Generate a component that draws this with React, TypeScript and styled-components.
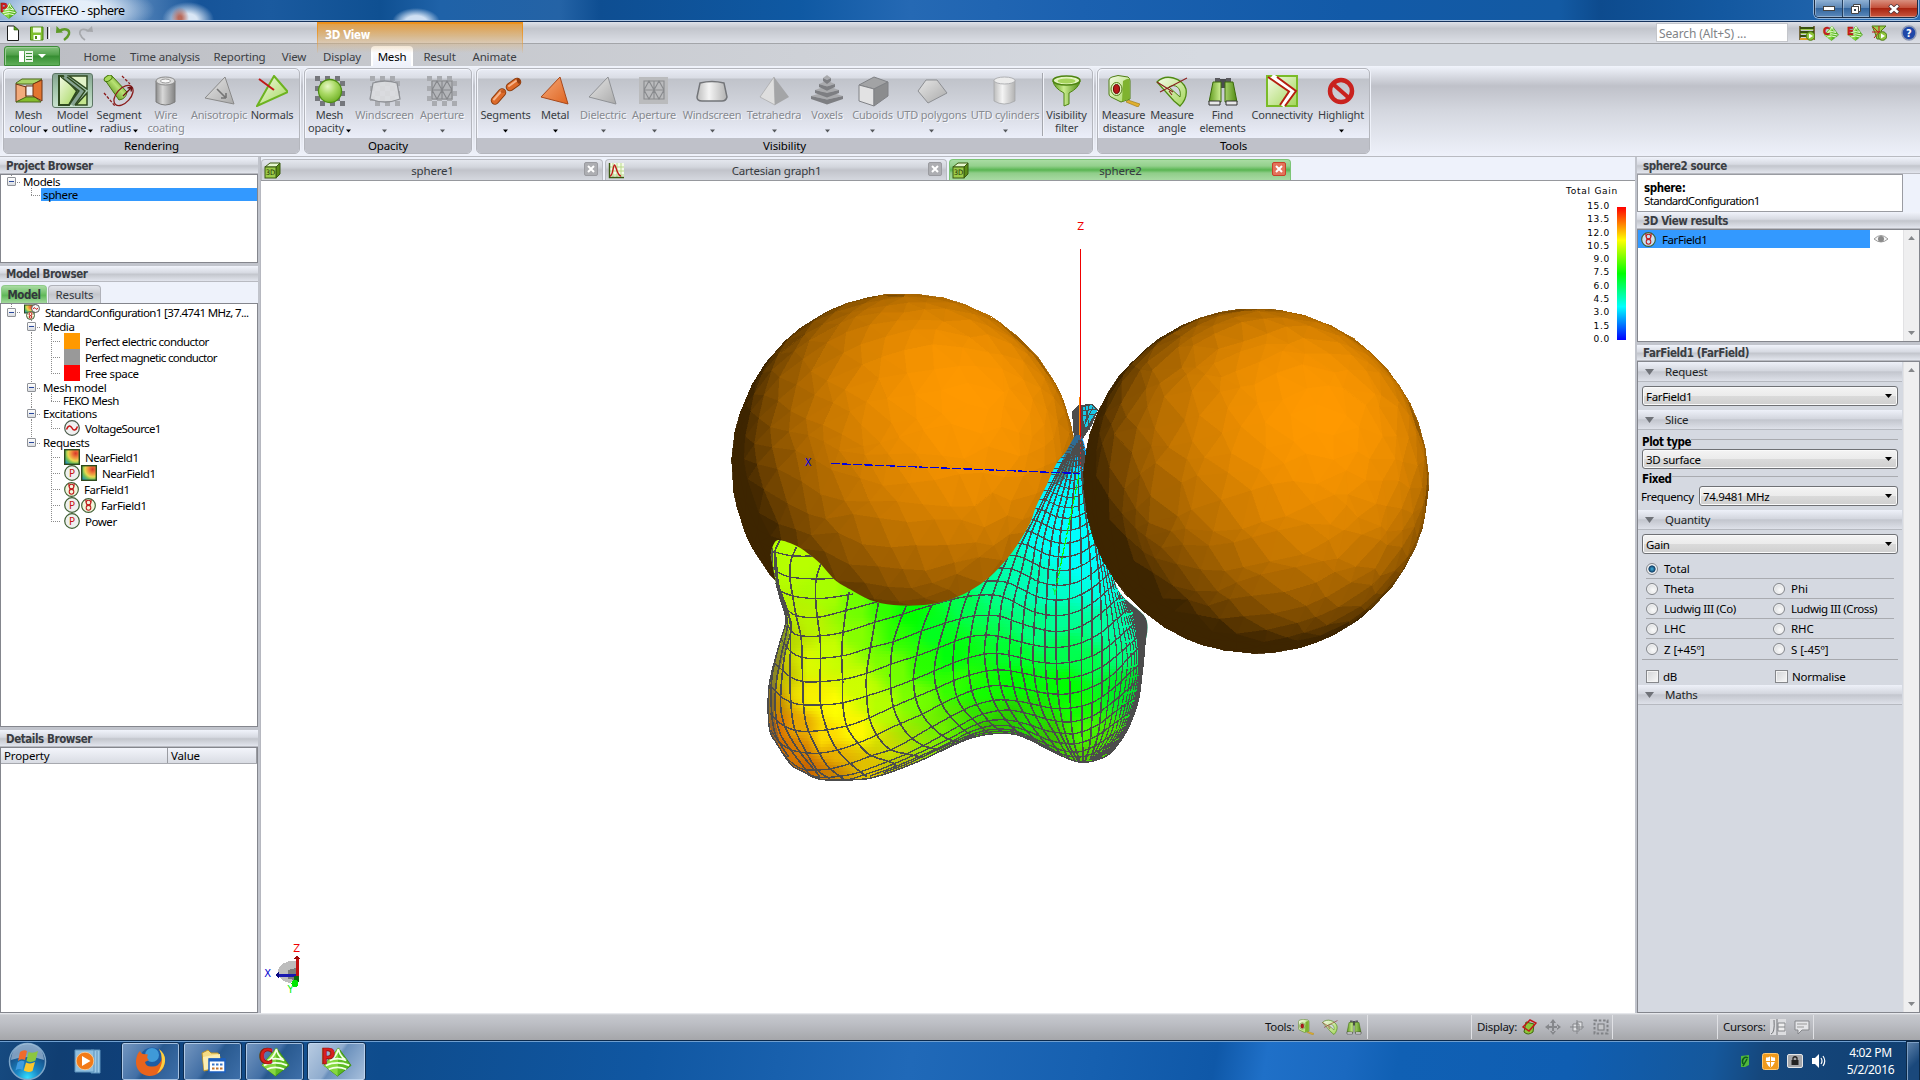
import React from "react";
import styled, { createGlobalStyle, css } from "styled-components";

const UI = `"Noto Sans", "Open Sans", sans-serif`;
const UIB = `"DejaVu Sans Condensed", "DejaVu Sans", sans-serif`;

const Global = createGlobalStyle`
  *{box-sizing:border-box}
  html,body{margin:0;padding:0;overflow:hidden;background:#c1c4cc}
  body{font:11px ${UI};letter-spacing:-.2px;color:#000;white-space:nowrap}
  svg{display:block;flex:none}
`;

/* ---------- frame ---------- */
const Screen = styled.div`width:1920px;height:1080px;display:flex;flex-direction:column;overflow:hidden;`;
const Defs = styled.svg`position:absolute;width:0;height:0`;
const TitleBar = styled.header`
  height:22px;flex:none;display:flex;align-items:flex-start;justify-content:space-between;
  border-bottom:1px solid #16335c;box-shadow:inset 0 -1px #a9c4e2;
  background:
    radial-gradient(ellipse 80px 26px at 75px 10px,rgba(235,243,252,.95) 35%,rgba(200,220,242,0) 100%),
    radial-gradient(ellipse 9px 11px at 180px 18px,rgba(180,85,65,.85) 20%,rgba(170,90,80,0)),
    radial-gradient(ellipse 26px 18px at 188px 20px,#d9e6f5 35%,rgba(160,190,225,0)),
    radial-gradient(ellipse 24px 14px at 416px 22px,#cfe0f3 45%,rgba(120,165,210,0)),
    linear-gradient(90deg,#8db0d6 0,#6d97c6 110px,#165499 200px,#1a5a9f 270px,#0f5092 380px,#1f62a8 440px,#2463a6 560px,#0e4e92 600px,#0f59a3 800px,#2569b4 910px,#1b61b0 1080px,#125aa8 1350px,#135aa3 1560px,#0d4b8e 1600px,#1358a0 1720px,#2a6db5 1920px);
`;
const TitleText = styled.div`display:flex;align-items:center;height:21px;font-size:12.5px;letter-spacing:-.55px;gap:4px;`;
const WinButtons = styled.div`display:flex;height:18px;margin-right:2px;border:1px solid #1b2c44;border-top:0;border-radius:0 0 5px 5px;overflow:hidden;box-shadow:0 0 0 1px rgba(220,235,250,.6);`;
const WinButton = styled.div<{ $w: number; $close?: boolean }>`
  width:${p => p.$w}px;display:flex;align-items:center;justify-content:center;border-right:1px solid #24405f;
  box-shadow:inset 1px -1px rgba(255,255,255,.35);
  background:${p => p.$close ? "linear-gradient(#d9907f,#c4513b 45%,#a82410 50%,#c8573f)" : "linear-gradient(#8fb1d4,#5d88b7 45%,#34669e 50%,#5c8abb)"};
  &:last-child{border-right:0}
`;
const QuickBar = styled.div`
  height:22px;flex:none;display:flex;align-items:center;position:relative;
  background:linear-gradient(#dfe2e9,#c2c5cc 30%,#dcdfe6);border-bottom:1px solid #a3a5a9;
`;
const QuickIcons = styled.div`display:flex;align-items:center;padding-left:5px;width:317px;flex:none`;
const Context = styled.div`
  width:206px;height:31px;align-self:flex-start;flex:none;padding:4px 0 0 7px;position:relative;z-index:2;
  font:bold 11.5px ${UIB};letter-spacing:-.35px;color:#fff;
  border:1px solid;border-top-width:2px;border-bottom:0;border-image:linear-gradient(#ee8e14,rgba(238,142,20,0)) 2;
  background:linear-gradient(rgba(226,158,66,.95),rgba(218,180,128,.8) 45%,rgba(210,202,190,0));
`;
const Spacer = styled.div`flex:1`;
const Search = styled.div`width:132px;height:19px;background:#fff;border:1px solid #c4c6cb;color:#808387;font-size:12px;letter-spacing:-.13px;padding:1px 2px;line-height:18px;margin-right:11px`;
const QuickRight = styled.div`display:flex;align-items:center;gap:8px;padding-right:3px`;
const TabRow = styled.div`height:22px;flex:none;display:flex;align-items:flex-end;background:linear-gradient(90deg,#bbbdc3 0,#c6c8cd 400px,#d6dae1 1200px);`;
const AppButton = styled.div`
  width:56px;height:20px;margin-left:4px;margin-right:13px;border:1px solid #3c8c38;border-radius:3px 3px 0 0;display:flex;align-items:center;justify-content:center;gap:5px;
  background:linear-gradient(#84c27c,#4f9f49 45%,#358d31 50%,#5fae59);box-shadow:inset 1px 1px #9ccb96;
`;
const RibbonTab = styled.div<{ $w: number; $on?: boolean }>`
  width:${p => p.$w}px;height:20px;line-height:21px;text-align:center;font-size:11.5px;letter-spacing:-.2px;color:#3b3e44;
  ${p => p.$on && css`background:linear-gradient(#fff,#eef1fa);color:#000;border:2px solid #fff;border-bottom:0;border-radius:4px 4px 0 0;line-height:18px;`}
`;
const Ribbon = styled.div`
  height:91px;flex:none;display:flex;gap:4px;padding:2px 3px 3px;border-bottom:1px solid #b9bbc1;
  background:linear-gradient(#f1f4fc 0,#e4e7ef 5px,#bfc1c9 20px,#d4d7df 45px,#eef1fa 90px);
`;
const Group = styled.div<{ $w: number }>`
  width:${p => p.$w}px;height:86px;border:1px solid #b4b6bd;border-radius:5px;display:flex;flex-direction:column;overflow:hidden;
  box-shadow:0 0 0 1px #eff2fa, inset 1px 1px #f4f6fc;
  background:linear-gradient(#e9ecf5 0,#d9dce4 9px,#c0c3ca 10px,#cdd0d8 30px,#eceffa 70px);
`;
const GroupItems = styled.div`flex:1;display:flex;padding-left:2px;padding-top:4px`;
const GroupTitle = styled.div`height:15px;background:#bfc1c9;text-align:center;line-height:15px;font-size:11.5px;letter-spacing:-.15px`;
const Tool = styled.div<{ $w: number; $off?: boolean }>`
  width:${p => p.$w}px;flex:none;display:flex;flex-direction:column;align-items:center;text-align:center;
  color:${p => p.$off ? "#878a90" : "#393d43"};text-shadow:${p => p.$off ? "1px 1px #f7f8fc" : "none"};
  font-size:11px;letter-spacing:-.2px;line-height:13px;
`;
const IconBox = styled.div<{ $on?: boolean }>`
  width:41px;height:35px;display:flex;align-items:center;justify-content:center;border-radius:3px;border:1px solid transparent;
  ${p => p.$on && css`border-color:#5c7564;background:linear-gradient(#86a392,#9fc2a8 40%,#c9e2cf);`}
`;
const ToolLine = styled.div`display:flex;align-items:flex-end;height:13px;justify-content:center;gap:1px`;
const Divider = styled.div`width:2px;height:63px;background:#a4a6ad;border-right:1px solid #f2f4fa;flex:none`;

/* ---------- body ---------- */
const Body = styled.main`height:856px;flex:none;display:grid;grid-template-columns:260px 1375px 285px;background:#c1c4cc;`;
const LeftCol = styled.aside`display:flex;flex-direction:column;padding-right:2px;border-right:0`;
const PanelHead = styled.div<{ $h?: number }>`
  height:${p => p.$h || 17}px;flex:none;padding-left:6px;font:bold 11.5px/${p => (p.$h ? 17 : 19)}px ${UIB};letter-spacing:-.42px;color:#3a3d43;overflow:hidden;
  border-bottom:1px solid #b8bac1;background:linear-gradient(#f0f3fb,#d7dae2 45%,#c3c6cd 55%,#e2e5ed);
`;
const Box = styled.div<{ $h: number }>`height:${p => p.$h}px;flex:none;background:#fff;border:1px solid #84868d;overflow:hidden;`;
const Gap = styled.div<{ $h: number; $c?: string }>`height:${p => p.$h}px;flex:none;background:${p => p.$c || "#c1c4cc"}`;
const MiniTabs = styled.div`height:21px;flex:none;display:flex;gap:1px;align-items:flex-end;background:#eef2fb;padding-left:1px`;
const MiniTab = styled.div<{ $w: number; $on?: boolean }>`
  width:${p => p.$w}px;height:18px;text-align:center;border-radius:4px 4px 0 0;
  font:${p => p.$on ? `bold 11.5px/19px ${UIB}` : `11.5px/17px ${UI}`};letter-spacing:${p => p.$on ? -.45 : -.15}px;color:#33373c;
  border:1px solid ${p => p.$on ? "#8fcb89" : "#b0b2b9"};border-bottom:0;
  background:${p => p.$on ? "linear-gradient(#a9dba3,#6fbf68 45%,#5fb858 55%,#a4d89e)" : "linear-gradient(#e2e4ea,#c4c6cc 50%,#d9dce2)"};
`;
const Row = styled.div<{ $h: number }>`height:${p => p.$h}px;display:flex;align-items:center;`;
const Cell = styled.div<{ $k: string }>`
  width:20px;height:100%;flex:none;position:relative;display:flex;align-items:center;padding-left:6px;
  &::before{content:"";position:absolute;left:10px;top:0;width:1px;
    height:${p => (p.$k === "end" || p.$k === "toggleEnd" ? "50%" : p.$k === "line" || p.$k === "tee" || p.$k === "toggle" ? "100%" : "0")};
    background:repeating-linear-gradient(#8b8b8b 0 1px,transparent 1px 2px)}
  &::after{content:"";position:absolute;left:10px;right:1px;top:50%;
    height:${p => (p.$k === "none" || p.$k === "line" ? 0 : 1)}px;
    background:repeating-linear-gradient(90deg,#8b8b8b 0 1px,transparent 1px 2px)}
`;
const Toggle = styled.i`
  width:9px;height:9px;border:1px solid #8f9297;border-radius:1px;background:linear-gradient(#fff,#d9dce0);position:relative;z-index:1;
  &::after{content:"";position:absolute;left:1px;top:3px;width:5px;height:1px;background:#28479c}
`;
const TreeLabel = styled.span<{ $gap?: number; $sel?: boolean; $ls?: number }>`
  padding-left:${p => p.$gap ?? 2}px;font-size:11.5px;letter-spacing:${p => p.$ls ?? -.38}px;line-height:13px;
  ${p => p.$sel && css`flex:1;background:#3399ff;`}
`;
const Swatch = styled.i<{ $c: string }>`width:16px;height:16px;background:${p => p.$c};margin-left:3px`;
const IconGap = styled.span<{ $g: number }>`margin-left:${p => p.$g}px;display:flex`;
const Columns = styled.div`
  height:16px;display:grid;grid-template-columns:167px 1fr;background:linear-gradient(#f3f5fb,#d9dce3);border-bottom:1px solid #a7a9af;font-size:11.5px;letter-spacing:-.15px;line-height:15px;
  span{padding-left:3px;border-right:1px solid #9a9ca2}
`;

const Centre = styled.section`display:flex;flex-direction:column;background:#fff;overflow:hidden;border-left:1px solid #b6b8c0`;
const DocTabs = styled.div`height:24px;flex:none;display:flex;gap:2px;align-items:flex-end;background:#eef2fb;border-bottom:1px solid #96989d`;
const DocTab = styled.div<{ $on?: boolean }>`
  width:342px;height:21px;display:flex;align-items:center;border-radius:4px 4px 0 0;padding:0 4px 0 2px;color:#363a40;font-size:11.5px;letter-spacing:-.2px;
  border:1px solid ${p => p.$on ? "#7cc576" : "#b9bbc2"};border-bottom:0;
  background:${p => p.$on ? "linear-gradient(#a9dca3,#93d08c 30%,#58b551 50%,#8fcd89 65%,#a8daa3)" : "linear-gradient(#e4e7ee,#d2d5dc 35%,#c1c3ca 50%,#d5d8df)"};
  span{flex:1;text-align:center}
`;
const Close = styled.i<{ $on?: boolean }>`
  width:14px;height:14px;border-radius:2px;border:1px solid ${p => p.$on ? "#c8402a" : "#9a9ba0"};background:${p => p.$on ? "#e3735a" : "#adaeb2"};
  display:flex;align-items:center;justify-content:center;margin-bottom:2px;
`;
const Canvas = styled.div`position:relative;width:1374px;flex:1;overflow:hidden`;

const RightCol = styled.aside`display:flex;flex-direction:column;padding-left:2px;`;
const SourceWrap = styled.div`height:38px;flex:none;background:#eef2fb`;
const Source = styled.div`width:266px;height:38px;background:#fff;border:1px solid #9a9ca2;padding:7px 0 0 6px;line-height:13px;font-size:11.5px;letter-spacing:-.66px;b{display:block;font:bold 11.5px/12px ${UIB};letter-spacing:-.4px}`;
const Results = styled.div`height:113px;flex:none;background:#fff;border:1px solid #84868d;display:flex`;
const ResultList = styled.div`flex:1`;
const ResultRow = styled.div`height:18px;display:flex;align-items:center;font-size:11.5px;letter-spacing:-.42px`;
const ResultSel = styled.div`width:232px;height:18px;background:#3399ff;display:flex;align-items:center;gap:6px;padding-left:3px;margin-right:3px`;
const Scroll = styled.div`width:16px;background:#efeff0;display:flex;flex-direction:column;justify-content:space-between;align-items:center;padding:6px 0;border-left:1px solid #e2e2e4`;
const Form = styled.div`flex:1;display:flex;background:#d5d9e1;border:1px solid #84868d;`;
const FormMain = styled.div`width:266px;padding-right:1px`;
const Section = styled.div`
  height:20px;display:flex;align-items:center;gap:11px;padding-left:7px;font-size:11.5px;letter-spacing:-.2px;color:#1c1f24;
  border-bottom:1px solid #b6b9c0;background:linear-gradient(#eef1f9,#d4d7df 45%,#c3c6ce 52%,#dee1e9);
`;
const Select = styled.div<{ $w?: number }>`
  width:${p => p.$w || 256}px;height:20px;margin-left:4px;border:1px solid #6f7175;border-radius:3px;display:flex;align-items:center;justify-content:space-between;
  padding:0 5px 0 3px;font-size:11.5px;letter-spacing:-.32px;background:linear-gradient(#f4f4f4,#ebebeb 50%,#dadada 51%,#cfcfcf);box-shadow:inset 0 0 0 1px #fafafa;
`;
const Legend = styled.div`height:15px;display:flex;align-items:center;margin-left:4px;width:256px;font:bold 11.5px/14px ${UIB};letter-spacing:-.42px;&::after{content:"";flex:1;height:1px;background:#a9abb0;margin-top:-4px}`;
const FieldRow = styled.div`display:flex;align-items:center;padding-left:3px;font-size:11.5px;letter-spacing:-.38px;height:20px;> span{width:54px}`;
const Options = styled.div`margin-left:4px;width:256px;border-bottom:1px solid #a5a7ac;height:101px;padding:0 4px`;
const OptRow = styled.div<{ $last?: boolean; $ls?: number }>`
  height:20px;display:grid;grid-template-columns:127px 1fr;align-items:center;border-bottom:${p => (p.$last ? 0 : 1)}px solid #a9abb0;font-size:11.5px;letter-spacing:${p => p.$ls ?? -.08}px;
`;
const Opt = styled.label<{ $gap?: number }>`display:flex;align-items:center;gap:${p => p.$gap ?? 6}px`;
const Radio = styled.i<{ $on?: boolean }>`
  width:12px;height:12px;border-radius:50%;border:1px solid #84878c;background:${p => (p.$on ? "radial-gradient(circle,#3fb3e0 0,#123e66 3.2px,#e9edf2 4px)" : "radial-gradient(circle at 60% 60%,#fbfbfb,#cfd2d6)")};box-shadow:inset 0 0 0 1px #f4f4f4;
`;
const Check = styled.i`width:13px;height:13px;border:1px solid #85878b;background:linear-gradient(135deg,#d2d4d7,#f8f8f8);box-shadow:inset 0 0 0 1px #f4f4f4`;
const Checks = styled.div`display:grid;grid-template-columns:129px 1fr;height:25px;align-items:end;padding:0 0 1px 4px;margin-left:4px;font-size:11.5px;letter-spacing:-.22px;`;

/* ---------- bottom ---------- */
const Status = styled.footer`height:27px;flex:none;display:flex;align-items:center;background:linear-gradient(#f0f1f5 0,#c6c8cd 2px,#bcbec4 40%,#a5a6aa);font-size:11.5px;letter-spacing:-.3px;color:#101215`;
const StatusGroup = styled.div<{ $w: number; $border?: boolean }>`
  width:${p => p.$w}px;height:24px;display:flex;align-items:center;flex:none;gap:8px;padding-left:5px;${p => p.$border !== false && css`border-right:1px solid #e0e1e5;`}
  svg:first-of-type{margin-left:-4px}
`;
const TaskBar = styled.div`
  height:41px;flex:none;display:flex;border-top:1px solid #0b2a4d;box-shadow:inset 0 1px #6f9fd0;align-items:stretch;
  background:linear-gradient(100deg,#164a80 0,#103e72 60px,#0f4079 130px,#14508f 300px,#0e4c8d 380px,#1057a2 640px,#2069b8 900px,#1660b0 1080px,#0f58a8 1200px,#1f70c8 1250px,#1a69c0 1330px,#1060b4 1380px,#0f5eb2 1550px,#15589c 1690px,#15477c 1740px,#103e70 1920px);
`;
const TaskSlot = styled.div<{ $w: number }>`width:${p => p.$w}px;display:flex;align-items:center;justify-content:center;flex:none`;
const TaskButton = styled.div<{ $on?: boolean }>`
  width:59px;height:39px;margin:1px 3px 0 0;border:1px solid #0d2c50;border-radius:3px;display:flex;align-items:center;justify-content:center;flex:none;
  box-shadow:inset 0 0 0 1px rgba(200,222,245,.75);
  background:${p => (p.$on ? "linear-gradient(125deg,#b9cce2 0,#8facce 45%,#6a90bc 50%,#a9c1dd)" : "linear-gradient(125deg,#7597c0 0,#426fa5 45%,#28598f 52%,#3f70aa)")};
`;
const Tray = styled.div`display:flex;align-items:center;gap:8px;padding-right:9px`;
const Clock = styled.div`width:69px;text-align:center;color:#fff;font-size:12px;letter-spacing:-.35px;line-height:17px;padding-top:3px;margin-right:1px`;
const ShowDesk = styled.div`width:14px;border:1px solid #0b2948;box-shadow:inset 1px 1px #7d9fc4;background:linear-gradient(135deg,#5f83ab,#1a487b 60%)`;

/* ---------- small shared drawings ---------- */
const Down = ({ c = "#000", w = 5, h = 3 }: { c?: string; w?: number; h?: number }) => (
  <svg width={w} height={h} viewBox="0 0 10 6" preserveAspectRatio="none"><path d="M0 0H10L5 6Z" fill={c} /></svg>
);
const Up = () => <svg width="7" height="4" viewBox="0 0 10 6"><path d="M0 6H10L5 0Z" fill="#85878a" /></svg>;

const LogoSvg = styled.svg`overflow:visible`;
const Feko = ({ l, s = 16 }: { l: string; s?: number }) => (
  <LogoSvg width={s} height={s} viewBox="0 0 32 32">
    <path d="M18 2L31 20L17 31L3 20Z" fill="#5dbb22" stroke="#3d9213" />
    <path d="M18 2L17 31L3 20Z" fill="#86d83f" />
    <path d="M18 3Q16 10 11 14M18 3Q19 10 25 14M5 20Q17 15 29 20M9 15Q17 11 26 15M8 24Q17 20 26 24" stroke="#f3ffe6" strokeWidth="1.8" fill="none" />
    <text x="0" y="19" fontFamily="DejaVu Sans Condensed" fontWeight="bold" fontSize="22" fill="#d8201c" stroke="#8e0b0b" strokeWidth=".7" letterSpacing="0">{l}</text>
  </LogoSvg>
);
const Cube3D = () => (
  <svg width="17" height="17" viewBox="0 0 17 17">
    <path d="M1 5L6 1H16L12 5Z" fill="#e6f7cf" stroke="#3a5a10" /><path d="M12 5L16 1V12L12 16Z" fill="#5b8c17" stroke="#3a5a10" />
    <rect x="1" y="5" width="11" height="11" fill="#9ccc4a" stroke="#3a5a10" />
    <text x="1.8" y="13.4" fontFamily="DejaVu Sans Condensed" fontSize="7.5" fill="#1c2e05">3D</text>
  </svg>
);
const GraphIcon = () => (
  <svg width="17" height="17" viewBox="0 0 17 17"><rect x="1" y="1" width="15" height="15" fill="#f4fae8" />
    <path d="M5 1V16M9 1V16M13 1V16M1 5H16M1 9H16M1 13H16" stroke="#b9d98a" /><path d="M1.500 1V15.500H16" stroke="#3a5a10" fill="none" strokeWidth="1.400" />
    <path d="M2 14C5 14 5 3 6.500 3S9 14 13 14" stroke="#c01818" fill="none" strokeWidth="1.400" /></svg>
);
const CloseX = () => <svg width="8" height="8" viewBox="0 0 8 8"><path d="M1 1L7 7M7 1L1 7" stroke="#fff" strokeWidth="2" /></svg>;

const PIcon = () => (
  <svg width="16" height="16" viewBox="0 0 16 16"><circle cx="8" cy="8" r="7.300" fill="#eef0ee" stroke="#3f5f33" strokeWidth="1.200" />
    <text x="4.900" y="12" fontFamily="DejaVu Sans Condensed" fontSize="11" fill="#c81414">P</text></svg>
);
const FarIcon = ({ c = "#f2f6dc" }: { c?: string }) => (
  <svg width="15" height="15" viewBox="0 0 16 16"><circle cx="8" cy="8" r="7.300" fill={c} stroke="#3f5f33" strokeWidth="1.200" />
    <circle cx="8" cy="4.800" r="2.500" fill="none" stroke="#c01c1c" strokeWidth="1.100" /><circle cx="8" cy="10.500" r="2.500" fill="none" stroke="#c01c1c" strokeWidth="1.100" /><path d="M5 1.500L5.500 5M11 1.500L10.500 5M5.500 7.700H10.500" fill="none" stroke="#c01c1c" strokeWidth="1.100" /></svg>
);
const SourceIcon = () => (
  <svg width="16" height="16" viewBox="0 0 16 16"><circle cx="8" cy="8" r="7.300" fill="#f0f0f0" stroke="#4a5a4a" strokeWidth="1.200" />
    <path d="M2.500 9.500C4 5 6.500 5 8 8S12 11 13.500 6.500" fill="none" stroke="#c81414" strokeWidth="1.500" /></svg>
);
const NearIcon = () => (
  <svg width="16" height="16" viewBox="0 0 16 16">
    <rect x=".7" y=".7" width="14.600" height="14.600" fill="url(#nf)" stroke="#2d4a1c" strokeWidth="1.400" /></svg>
);
const ConfigIcon = () => (
  <svg width="16" height="16" viewBox="0 0 16 16"><rect x=".5" y="1" width="10" height="8" fill="url(#nf)" stroke="#2d4a1c" />
    <circle cx="11.500" cy="4.500" r="4" fill="#f4f4f4" stroke="#555" /><path d="M9 5Q10 2.500 11.500 4.500T14 4" stroke="#c81414" fill="none" />
    <circle cx="6.500" cy="11.500" r="4" fill="#f2f6dc" stroke="#3f5f33" /><circle cx="6.500" cy="10" r="1.500" fill="none" stroke="#c01c1c" /><circle cx="6.500" cy="13" r="1.300" fill="none" stroke="#c01c1c" /></svg>
);

/* ---------- ribbon icons ---------- */
const Checker = ({ c }: { c: string }) => (
  <g fill={c}>{Array.from({ length: 36 }, (_, i) => [i % 6, Math.floor(i / 6)]).filter(([x, y]) => (x + y) % 2 === 0).map(([x, y]) => <rect key={`${x}-${y}`} x={1 + x * 5} y={1 + y * 5} width="5" height="5" />)}</g>
);
const grad = (
  <defs>
    <linearGradient id="gg" x1="0" y1="0" x2="1" y2="1"><stop offset="0" stopColor="#f5fbe8" /><stop offset="1" stopColor="#a3d65a" /></linearGradient>
    <linearGradient id="go" x1="0" y1="0" x2="1" y2="1"><stop offset="0" stopColor="#f5a878" /><stop offset="1" stopColor="#df6420" /></linearGradient>
    <linearGradient id="gy" x1="0" y1="0" x2="1" y2="1"><stop offset="0" stopColor="#e6e6e6" /><stop offset="1" stopColor="#aaa" /></linearGradient>
    <linearGradient id="cy" x1="0" x2="1"><stop offset="0" stopColor="#8b8b8b" /><stop offset=".35" stopColor="#d8d8d8" /><stop offset="1" stopColor="#838383" /></linearGradient>
    <linearGradient id="cl" x1="0" x2="1"><stop offset="0" stopColor="#bdbdbd" /><stop offset=".4" stopColor="#f4f4f4" /><stop offset="1" stopColor="#b2b2b2" /></linearGradient>
    <linearGradient id="cg" x1="0" x2="1"><stop offset="0" stopColor="#5f9a1c" /><stop offset=".4" stopColor="#c9ec8e" /><stop offset="1" stopColor="#4f8a12" /></linearGradient>
    <linearGradient id="cd" x1=".2" y1=".8" x2=".8" y2=".2"><stop offset="0" stopColor="#4f8a12" /><stop offset=".6" stopColor="#b9e274" /><stop offset="1" stopColor="#5f9a1c" /></linearGradient>
    <radialGradient id="sg" cx=".4" cy=".3" r=".7"><stop offset="0" stopColor="#e6f7c4" /><stop offset=".5" stopColor="#a9d964" /><stop offset="1" stopColor="#74b32a" /></radialGradient>
    <radialGradient id="nf" cx=".75" cy=".25" r=".95"><stop offset="0" stopColor="#d8362a" /><stop offset=".3" stopColor="#f08a3c" /><stop offset=".55" stopColor="#e8d850" /><stop offset=".75" stopColor="#6cbf58" /><stop offset="1" stopColor="#1f8ec0" /></radialGradient>
  </defs>
);
const ApertureLines = ({ c }: { c: string }) => <path d="M6 6H26V24H6ZM6 15H26M6 15L11 6L21 24L26 15L21 6L11 24L6 15M16 6V24M11 6L6 15M21 6L26 15" stroke={c} fill="none" strokeWidth="1.1" />;
const Tape = () => (<>
  <path d="M20 25L32 29L30 32L18 27Z" fill="#e0b030" stroke="#9a7410" strokeWidth=".6" />
  <path d="M1 5Q1 3 4 2L10 .5L20 2Q22 3 22 6V24L13 27L3 22Q1 21 1 19Z" fill="url(#gg)" stroke="#4f7d14" /><path d="M15 6Q20 3 21.500 4V24L14 26.500Z" fill="#7fb32f" />
  <ellipse cx="8.500" cy="14" rx="5.500" ry="6.500" fill="#dff0bd" stroke="#4f7d14" /><ellipse cx="8.500" cy="14" rx="3" ry="4.500" fill="#b81818" stroke="#5e0909" /></>
);
const Protractor = () => (<>
  <path d="M1 7C10 -2 26 3 30 14C31 20 29 26 24 31L18 26Z" fill="url(#gg)" stroke="#4f8a12" strokeWidth="1.3" /><path d="M13 12C19 8 26 13 24 22Z" fill="#d2d6db" stroke="#4f8a12" />
  <path d="M1 7L17 17M4 17L31 3M13 16L16 20" stroke="#8a2020" strokeWidth="1.100" fill="none" /></>
);
const Binoc = () => (<>
  <path d="M8 3H13V7H8ZM19 3H24V7H19Z" fill="#5a5a5e" /><rect x="13" y="4" width="6" height="9" fill="#4a4c50" />
  <path d="M6 7H14V27H2ZM18 7H26L30 27H18Z" fill="url(#cg)" stroke="#3c6a0c" /><path d="M2 26H13V30H2ZM19 26H30V30H19Z" fill="#e8e8e8" stroke="#333" /></>
);

const icons: Record<string, React.ReactNode> = {
  meshColour: <><path d="M3 8L9 4H29L21 9H3Z" fill="#a8d468" stroke="#4e6a1c" /><path d="M3 9L13 12V23L3 27Z" fill="#f2ab7c" stroke="#6e3210" /><path d="M13 11H21V21H13Z" fill="#eef0f6" stroke="#6e3210" /><path d="M3 27L13 22H22L28 27Z" fill="#84bc2c" stroke="#4e6a1c" /><path d="M20 9L29 5V26L20 21Z" fill="#e27530" stroke="#6e3210" /></>,
  modelOutline: <g stroke="#2f4a20" strokeWidth="2"><path d="M2 1H6L20 16L12 30H2Z" fill="url(#gg)" /><path d="M12 1H30V14Z" fill="#e2f3c8" strokeWidth="1.500" /><path d="M30 18V30H19Z" fill="#c4e68e" strokeWidth="1.500" /><path d="M7 2L25 16L15 30" fill="none" stroke="#86a392" strokeWidth="4.500" /><path d="M4 2L22 16L12 30M10 2L28 16L18 30" fill="none" strokeWidth="1.400" /></g>,
  segmentRadius: <><path d="M2 5L9 1L24 17Q23 24 16 25Z" fill="url(#cd)" stroke="#47780f" /><ellipse cx="5.500" cy="3.500" rx="4.300" ry="2.600" fill="#a8da5a" stroke="#47780f" transform="rotate(-30 5 4)" /><ellipse cx="20.500" cy="20.500" rx="7" ry="12" transform="rotate(42 20.500 20.500)" fill="none" stroke="#8a1b1b" strokeWidth="1.300" /><path d="M20 21L29 12M29 12L24.500 13M29 12L28 16.500" stroke="#6b1212" strokeWidth="1.300" fill="none" /><path d="M19 1L27 9M1 18L12 31" stroke="#8a1b1b" strokeWidth="1.300" strokeDasharray="3 1.500" /></>,
  wire: <><path d="M6 6V27Q15 33 25 27V6Z" fill="url(#cy)" stroke="#7c7c7c" /><ellipse cx="15.500" cy="6" rx="9.500" ry="4" fill="#dcdcdc" stroke="#8a8a8a" /><ellipse cx="15.500" cy="6" rx="5" ry="2" fill="#f8f8f8" stroke="#999" /></>,
  anisotropic: <><path d="M22 2L31 29L2 23Z" fill="url(#gy)" stroke="#8a8a8a" /><path d="M14 14L23 23M23 23V18M23 23H18" stroke="#757575" strokeWidth="1.600" fill="none" /></>,
  normals: <><path d="M18 1L32 17L1 31Z" fill="url(#gg)" stroke="#6db320" strokeWidth="2" /><path d="M3 4L18 15" stroke="#c01818" strokeWidth="2" /></>,
  meshOpacity: <><Checker c="#75777c" /><circle cx="16" cy="16" r="11.500" fill="url(#sg)" stroke="#4e8f12" strokeWidth="1.300" /></>,
  windCheck: <><Checker c="#a9abb0" /><path d="M4 8Q16 4 28 8L31 24Q16 30 1 24Z" fill="#dcdde0" fillOpacity=".9" stroke="#8e9095" strokeWidth="1.300" /></>,
  apertCheck: <><Checker c="#a9abb0" /><rect x="5" y="5" width="22" height="20" fill="#b3b5b9" /><ApertureLines c="#85878b" /></>,
  segments: <g strokeLinecap="round" fill="none"><path d="M5 25.500L12 17.500M20 12L27 7" stroke="#8a3b0c" strokeWidth="8.500" /><path d="M5 25.500L12 17.500M20 12L27 7" stroke="#dc6a2a" strokeWidth="6.500" /><path d="M4 24.500L11 16.500M19 11L26 6" stroke="#f6b48a" strokeWidth="2" /><ellipse cx="28.500" cy="6" rx="1.600" ry="2.800" fill="#8f3c10" transform="rotate(-20 28.500 6)" /><ellipse cx="13" cy="16.500" rx="2.600" ry="1.600" fill="#c25a20" /></g>,
  metal: <path d="M21 2L29 29L2 22Z" fill="url(#go)" stroke="#a8481a" />,
  dielectric: <path d="M21 2L29 29L2 22Z" fill="url(#gy)" stroke="#909296" />,
  aperture: <><rect x="1" y="2" width="29" height="27" fill="#babbbd" /><ApertureLines c="#898b8e" /></>,
  windscreen: <path d="M4 8Q16 5 28 8L31 22Q30 26 26 26H6Q1 26 1 22Z" fill="url(#cl)" stroke="#737579" strokeWidth="1.500" />,
  tetra: <><path d="M16 2L17 30L2 22Z" fill="#dedede" stroke="#a0a0a0" strokeWidth=".6" /><path d="M16 2L31 22L17 30Z" fill="#a4a5a7" /></>,
  voxels: <>{[3, 2, 1, 0].map(i => { const w = 4 + i * 4, y = 2 + i * 6; return <g key={i}><path d={`M16 ${y - 2 - i * .6}L${16 + w} ${y + 1}L16 ${y + 3 + i * .5}L${16 - w} ${y + 1}Z`} fill="#a9aaad" /><path d={`M${16 - w} ${y + 1}L16 ${y + 3 + i * .5}L${16 + w} ${y + 1}V${y + 4}L16 ${y + 7 + i * .8}L${16 - w} ${y + 4}Z`} fill="#7d7e82" /></g>; })}</>,
  cuboids: <g stroke="#808286"><path d="M2 10L17 2L31 7L17 14Z" fill="#a2a3a5" /><path d="M2 10L17 14V31L2 26Z" fill="#e2e2e3" /><path d="M17 14L31 7V21L17 31Z" fill="#8b8c8e" /></g>,
  polygon: <path d="M10 5H21L31 18L12 28L2 16Z" fill="url(#gy)" stroke="#8d8f93" />,
  cylinder: <><path d="M5 5V26Q15 32 26 26V5Z" fill="url(#cl)" stroke="#a6a7aa" strokeWidth=".8" /><ellipse cx="15.500" cy="5.500" rx="10.500" ry="3.500" fill="#ececec" stroke="#b0b1b4" /></>,
  funnel: <><path d="M2 6Q3 13 13 18V31L18 29V18Q28 13 29 6Z" fill="url(#cg)" stroke="#4d8411" /><ellipse cx="15.500" cy="5.500" rx="13.500" ry="4.500" fill="#e2f4bd" stroke="#4d8411" strokeWidth="1.500" /><ellipse cx="15.500" cy="6" rx="9" ry="2.500" fill="#a6d45c" /></>,
  tape: <Tape />, angle: <Protractor />, find: <Binoc />,
  connectivity: <><rect x="1" y="1" width="30" height="30" fill="url(#gg)" stroke="#7abb27" strokeWidth="2" /><path d="M6 1L27 16L16 31" fill="none" stroke="#fff" strokeWidth="5" /><path d="M2 2L23 16.500L14 30M11 2L30 16L19 31" fill="none" stroke="#b51f10" strokeWidth="2" /></>,
  highlight: <><circle cx="16" cy="16" r="11" fill="none" stroke="#c9221e" strokeWidth="4.500" /><path d="M8 9L24 23" stroke="#c9221e" strokeWidth="4" /></>,
};
const Icon = ({ n, s = 32 }: { n: string; s?: number }) => <svg width={s} height={s} viewBox="0 0 32 32">{icons[n]}</svg>;

type ToolDef = { w: number; i: string; a: string; b?: string; off?: boolean; arrow?: boolean; on?: boolean };
const ToolItem = ({ t }: { t: ToolDef }) => (
  <Tool $w={t.w} $off={t.off}>
    <IconBox $on={t.on}><Icon n={t.i} /></IconBox>
    <ToolLine>{t.a}</ToolLine>
    <ToolLine>{t.b}{t.arrow && <IconGap $g={t.b ? 1 : 0}><svg width="5" height="6" viewBox="0 0 5 6"><path d="M0 1.500H5L2.500 4.500Z" fill={t.off ? "#55585c" : "#000"} /></svg></IconGap>}</ToolLine>
  </Tool>
);
const groups: { title: string; w: number; tools: ToolDef[] }[] = [
  { title: "Rendering", w: 297, tools: [
    { w: 45, i: "meshColour", a: "Mesh", b: "colour", arrow: true }, { w: 43, i: "modelOutline", a: "Model", b: "outline", arrow: true, on: true },
    { w: 50, i: "segmentRadius", a: "Segment", b: "radius", arrow: true }, { w: 44, i: "wire", a: "Wire", b: "coating", off: true },
    { w: 62, i: "anisotropic", a: "Anisotropic", off: true }, { w: 44, i: "normals", a: "Normals" }] },
  { title: "Opacity", w: 168, tools: [
    { w: 45, i: "meshOpacity", a: "Mesh", b: "opacity", arrow: true }, { w: 65, i: "windCheck", a: "Windscreen", off: true, arrow: true }, { w: 50, i: "apertCheck", a: "Aperture", off: true, arrow: true }] },
  { title: "Visibility", w: 617, tools: [
    { w: 53, i: "segments", a: "Segments", arrow: true }, { w: 46, i: "metal", a: "Metal", arrow: true }, { w: 50, i: "dielectric", a: "Dielectric", off: true, arrow: true },
    { w: 52, i: "aperture", a: "Aperture", off: true, arrow: true }, { w: 64, i: "windscreen", a: "Windscreen", off: true, arrow: true }, { w: 60, i: "tetra", a: "Tetrahedra", off: true, arrow: true },
    { w: 46, i: "voxels", a: "Voxels", off: true, arrow: true }, { w: 45, i: "cuboids", a: "Cuboids", off: true, arrow: true }, { w: 73, i: "polygon", a: "UTD polygons", off: true, arrow: true },
    { w: 74, i: "cylinder", a: "UTD cylinders", off: true, arrow: true }, { w: 45, i: "funnel", a: "Visibility", b: "filter" }] },
  { title: "Tools", w: 273, tools: [
    { w: 47, i: "tape", a: "Measure", b: "distance" }, { w: 50, i: "angle", a: "Measure", b: "angle" }, { w: 51, i: "find", a: "Find", b: "elements" },
    { w: 68, i: "connectivity", a: "Connectivity" }, { w: 50, i: "highlight", a: "Highlight", arrow: true }] },
];

/* ---------- 3D scene (viewport coordinates = screen coordinates) ---------- */
type V = [number, number, number];
const unit = (v: V): V => { const l = Math.hypot(...v); return [v[0] / l, v[1] / l, v[2] / l]; };
const LIGHT = unit([0.38, 0.38, 0.84]);

function sphereFaces(seed: number) {
  const g = (1 + Math.sqrt(5)) / 2;
  const p: V[] = [[-1, g, 0], [1, g, 0], [-1, -g, 0], [1, -g, 0], [0, -1, g], [0, 1, g], [0, -1, -g], [0, 1, -g], [g, 0, -1], [g, 0, 1], [-g, 0, -1], [-g, 0, 1]];
  const f = [[0, 11, 5], [0, 5, 1], [0, 1, 7], [0, 7, 10], [0, 10, 11], [1, 5, 9], [5, 11, 4], [11, 10, 2], [10, 7, 6], [7, 1, 8], [3, 9, 4], [3, 4, 2], [3, 2, 6], [3, 6, 8], [3, 8, 9], [4, 9, 5], [2, 4, 11], [6, 2, 10], [8, 6, 7], [9, 8, 1]];
  const N = 8;
  const spin = (v: V): V => {
    const a = 0.5 + seed, b = 0.35, [x, y, z] = v;
    const x1 = x * Math.cos(a) - y * Math.sin(a), y1 = x * Math.sin(a) + y * Math.cos(a);
    const j = 0.034;
    const q = unit([x1, y1 * Math.cos(b) - z * Math.sin(b), y1 * Math.sin(b) + z * Math.cos(b)]);
    return unit([q[0] + j * Math.sin(q[1] * 37 + q[2] * 23 + seed), q[1] + j * Math.sin(q[0] * 41 + q[2] * 29), q[2] + j * Math.sin(q[0] * 31 + q[1] * 43)]);
  };
  const out: { pts: V[]; i: number }[] = [];
  f.forEach(([a, b, c]) => {
    const at = (i: number, j: number): V => {
      const k = N - i - j;
      return spin(unit([0, 1, 2].map(d => (p[a][d] * k + p[b][d] * i + p[c][d] * j) / N) as V));
    };
    for (let i = 0; i < N; i++) for (let j = 0; j < N - i; j++) {
      const tris = [[at(i, j), at(i + 1, j), at(i, j + 1)]];
      if (i + j < N - 1) tris.push([at(i + 1, j), at(i + 1, j + 1), at(i, j + 1)]);
      tris.forEach(t => {
        const n = unit([0, 1, 2].map(d => t[0][d] + t[1][d] + t[2][d]) as V);
        if (n[2] < -0.12) return;
        const d = Math.max(0, n[0] * LIGHT[0] + n[1] * LIGHT[1] + n[2] * LIGHT[2]);
        out.push({ pts: t as V[], i: 0.24 + 0.76 * Math.pow(d, 0.85) });
      });
    }
  });
  return out;
}
const Sphere = ({ cx, cy, r, seed }: { cx: number; cy: number; r: number; seed: number }) => (
  <g>
    {sphereFaces(seed).map((f, k) => {
      const c = `rgb(${Math.round(255 * f.i)},${Math.round(153 * f.i)},0)`;
      return <polygon key={k} points={f.pts.map(v => `${(cx + v[0] * r).toFixed(1)},${(cy - v[1] * r).toFixed(1)}`).join(" ")} fill={c} stroke={c} strokeWidth=".6" />;
    })}
  </g>
);

type P2 = [number, number];
/* the lobe is digitised on a 3x grid with its origin at (750, 520) */
const OX = 750, OY = 520;
const toPath = (pts: P2[], closed = false) => {
  let d = `M${pts[0][0]} ${pts[0][1]}`;
  for (let i = 0; i < pts.length - 1; i++) {
    const a = pts[Math.max(0, i - 1)], b = pts[i], c = pts[i + 1], e = pts[Math.min(pts.length - 1, i + 2)];
    d += `C${b[0] + (c[0] - a[0]) / 6} ${b[1] + (c[1] - a[1]) / 6} ${c[0] - (e[0] - b[0]) / 6} ${c[1] - (e[1] - b[1]) / 6} ${c[0]} ${c[1]}`;
  }
  return d + (closed ? "Z" : "");
};
const outline: P2[] = [
  [62, 105], [70, 75], [88, 60], [140, 78], [180, 105], [210, 130], [255, 180], [300, 208], [360, 240], [430, 255], [510, 256], [590, 242], [660, 212], [720, 170], [770, 118], [805, 70], [840, 10], [858, -40], [890, -105], [920, -170], [948, -205], [975, -250],
  [995, -250], [1020, -160], [1060, 0], [1100, 200], [1187, 295], [1184, 380], [1176, 460], [1165, 540], [1145, 600], [1120, 650], [1080, 700], [1040, 720], [1000, 727], [970, 722], [930, 705], [880, 680], [830, 655], [790, 642], [720, 642], [660, 655], [600, 680], [520, 718], [440, 750], [385, 768], [335, 778], [212, 778], [160, 755], [130, 740], [105, 710], [80, 670], [62, 640], [55, 590], [57, 500], [75, 420], [95, 350], [108, 300], [92, 240], [78, 190],
];
const cols: P2[][] = [
  [[66, 85], [68, 140], [80, 200], [106, 290], [85, 380], [66, 470], [64, 560], [75, 640], [115, 710]],
  [[75, 100], [82, 190], [105, 270], [112, 320], [95, 400], [80, 480], [75, 560], [90, 640], [130, 700], [180, 765]],
  [[78, 110], [85, 190], [105, 265], [125, 320], [105, 400], [95, 480], [92, 560], [105, 620], [145, 690], [210, 770]],
  [[90, 60], [74, 100], [78, 165], [92, 215], [118, 290], [122, 350], [120, 450], [122, 540], [132, 620], [165, 690], [200, 748], [240, 777]],
  [[140, 80], [122, 125], [120, 175], [128, 228], [138, 285], [153, 350], [156, 410], [158, 485], [160, 550], [168, 610], [190, 665], [230, 735], [280, 777]],
  [[213, 130], [198, 180], [197, 240], [203, 300], [210, 350], [212, 413], [210, 485], [212, 555], [228, 620], [255, 680], [300, 730], [350, 770]],
  [[297, 215], [285, 290], [278, 350], [275, 410], [278, 480], [278, 548], [290, 618], [320, 665], [360, 705], [430, 730], [440, 750]],
  [[385, 250], [375, 305], [362, 380], [350, 460], [350, 528], [358, 595], [380, 645], [420, 688], [470, 702], [520, 712]],
  [[470, 255], [455, 290], [430, 365], [422, 430], [422, 500], [430, 560], [450, 610], [480, 650], [520, 677], [570, 690]],
  [[545, 255], [515, 333], [500, 408], [490, 475], [497, 535], [515, 580], [545, 620], [590, 655], [630, 667]],
  [[605, 235], [585, 310], [565, 380], [553, 450], [560, 510], [580, 560], [615, 605], [655, 640], [680, 650]],
  [[660, 210], [640, 260], [625, 320], [612, 380], [610, 450], [615, 510], [635, 560], [680, 610], [720, 642]],
  [[718, 168], [690, 225], [672, 290], [660, 360], [655, 430], [665, 510], [690, 570], [740, 625], [780, 642]],
  [[772, 115], [740, 190], [722, 250], [708, 345], [703, 400], [710, 460], [722, 520], [745, 570], [790, 625], [830, 654]],
  [[940, -180], [860, -20], [805, 90], [775, 180], [755, 250], [745, 345], [740, 400], [748, 480], [765, 540], [800, 600], [860, 665]],
  [[955, -200], [880, -45], [840, 50], [815, 150], [790, 250], [780, 360], [778, 410], [785, 470], [802, 540], [840, 610], [900, 688]],
  [[960, -200], [900, -60], [862, 50], [845, 150], [825, 250], [815, 370], [812, 420], [822, 480], [840, 550], [880, 630], [930, 700]],
  [[970, -215], [920, -75], [885, 40], [868, 150], [855, 275], [850, 380], [850, 430], [858, 500], [880, 580], [920, 650], [955, 715]],
  [[975, -220], [938, -80], [910, 30], [895, 150], [887, 300], [885, 380], [887, 450], [895, 530], [915, 600], [945, 670], [975, 722]],
  [[980, -230], [955, -85], [937, 0], [926, 100], [920, 200], [918, 350], [920, 450], [925, 530], [940, 620], [960, 680], [985, 724]],
  [[984, -230], [970, -80], [962, 30], [960, 150], [957, 300], [958, 420], [960, 520], [965, 620], [975, 680], [990, 725]],
  [[987, -240], [986, -80], [992, 50], [995, 200], [995, 400], [995, 550], [997, 650], [1000, 725]],
  [[989, -240], [1000, -80], [1015, 50], [1025, 200], [1027, 400], [1027, 550], [1020, 670], [1005, 724]],
  [[991, -240], [1010, -80], [1032, 50], [1050, 200], [1056, 400], [1055, 530], [1045, 640], [1020, 720]],
];
const innerEdge: P2[] = [[991, -240], [1010, -80], [1032, 50], [1050, 200], [1056, 400], [1055, 530], [1045, 640], [1020, 720]];
const outerEdge: P2[] = [[995, -240], [1030, -80], [1066, 50], [1115, 180], [1184, 380], [1168, 530], [1122, 650], [1040, 720]];
[.18, .34, .47, .58, .67, .74, .8, .85, .89, .93, .965, 1].forEach(t => cols.push(innerEdge.map((p, i) => [p[0] + (outerEdge[i][0] - p[0]) * t, p[1] + (outerEdge[i][1] - p[1]) * t] as P2)));

const rowD: P2[] = [[106, 300], [125, 335], [150, 347], [210, 348], [280, 337], [370, 308], [450, 285], [530, 260], [620, 235], [690, 225], [750, 228], [800, 250], [850, 275], [920, 287], [980, 275], [1040, 240], [1110, 175], [1180, 100]];
const rows: P2[][] = [
  [[66, 95], [90, 100], [130, 108], [210, 108]],
  [[75, 150], [85, 158], [125, 172], [210, 177], [280, 172]],
  [[80, 205], [105, 220], [150, 232], [220, 235], [310, 222]],
  [[95, 255], [130, 283], [160, 291], [210, 291], [300, 268], [390, 243]],
  rowD,
  [[95, 360], [120, 393], [155, 412], [210, 415], [290, 405], [360, 383], [430, 365], [515, 333], [600, 305], [670, 288], [745, 288], [800, 306], [850, 322], [920, 335], [990, 320], [1050, 282], [1120, 220], [1180, 160]],
  [[75, 430], [120, 470], [160, 485], [210, 485], [280, 478], [350, 460], [430, 430], [500, 408], [580, 378], [650, 352], [710, 345], [760, 352], [820, 368], [880, 380], [930, 382], [990, 370], [1050, 340], [1120, 280], [1185, 220]],
  [[60, 495], [100, 535], [140, 552], [210, 555], [280, 548], [350, 528], [430, 502], [500, 475], [560, 450], [620, 425], [690, 405], [740, 400], [800, 410], [860, 425], [930, 430], [1000, 418], [1060, 390], [1120, 340], [1185, 280]],
  [[60, 580], [90, 610], [140, 632], [210, 632], [290, 618], [355, 595], [430, 560], [500, 530], [560, 505], [610, 482], [660, 465], [710, 453], [760, 450], [820, 460], [880, 472], [930, 477], [1000, 465], [1060, 438], [1120, 390], [1185, 330]],
  [[62, 630], [90, 668], [130, 692], [200, 700], [270, 688], [330, 667], [380, 645], [430, 620], [500, 590], [560, 560], [610, 535], [665, 512], [720, 498], [770, 498], [830, 508], [890, 520], [950, 522], [1010, 508], [1080, 470], [1140, 410], [1180, 370]],
  [[90, 690], [125, 728], [160, 748], [230, 748], [300, 731], [365, 707], [420, 690], [470, 665], [520, 635], [565, 610], [620, 580], [675, 555], [740, 540], [800, 543], [860, 555], [910, 565], [970, 563], [1030, 546], [1090, 505], [1170, 430]],
  [[150, 752], [210, 772], [300, 764], [360, 745], [420, 722], [470, 702], [520, 677], [560, 655], [600, 633], [650, 605], [700, 582], [770, 570], [830, 580], [890, 597], [930, 605], [970, 605], [1030, 587], [1090, 545], [1165, 480]],
  [[300, 778], [380, 752], [440, 728], [500, 702], [560, 675], [610, 650], [660, 622], [710, 603], [770, 600], [830, 612], [890, 632], [940, 640], [980, 640], [1040, 617], [1100, 572], [1160, 530]],
  [[360, 768], [440, 738], [500, 713], [560, 686], [610, 662], [660, 636], [720, 618], [780, 618], [840, 636], [890, 658], [940, 670], [985, 670], [1040, 648], [1100, 605], [1150, 570]],
  [[400, 758], [470, 732], [540, 700], [600, 672], [660, 645], [720, 629], [785, 630], [840, 650], [890, 672], [940, 692], [990, 695], [1040, 675], [1100, 635]],
  [[560, 698], [610, 673], [660, 650], [720, 636], [788, 636], [840, 655], [890, 680], [940, 704], [990, 711], [1040, 695], [1100, 655]],
];
const APEX: P2 = [985, -262];
[.915, .835, .755, .68, .605, .535, .468, .41, .355, .305, .26, .22, .185, .155, .13, .108, .09, .075].forEach(s =>
  rows.push(rowD.slice(7).map(p => [APEX[0] + (p[0] - APEX[0]) * s * (1 + (1 - s) * .12), APEX[1] + (p[1] - APEX[1]) * s] as P2)));

const samples: [number, number, string][] = [
  [80, 100, "b4ff00"], [150, 120, "b8ff00"], [230, 210, "a8ff00"], [170, 300, "b8f400"], [330, 250, "70ff00"], [400, 260, "30ff00"], [480, 290, "00ff00"], [430, 330, "30ff00"], [330, 340, "84ff00"], [240, 400, "c8ff00"], [180, 430, "dcfa00"], [120, 350, "b8d800"], [90, 450, "c0b800"], [180, 530, "f8f000"], [250, 560, "ffff00"], [330, 500, "ccff00"], [430, 450, "74ff00"], [520, 430, "28ff00"], [600, 400, "00ff0c"], [560, 330, "00ff20"], [650, 250, "00ff50"], [700, 190, "00ff90"], [780, 140, "00ffb0"], [620, 500, "30ff00"], [700, 520, "10ff00"], [500, 540, "74ff00"], [400, 560, "b4ff00"], [320, 630, "fffa00"], [230, 650, "ffe000"], [150, 620, "e8a800"], [80, 620, "d87000"], [60, 560, "c08800"], [100, 690, "d06800"], [180, 745, "c86400"], [140, 690, "d67c00"], [250, 700, "e8b000"], [250, 765, "cc8400"], [350, 740, "e0c000"], [430, 690, "ccdc00"], [500, 660, "98e800"], [560, 620, "74f000"], [620, 600, "50e800"], [450, 740, "b0c000"], [700, 570, "30e400"], [780, 600, "28cc00"], [720, 630, "38b800"], [850, 600, "20e000"], [900, 650, "38c400"], [980, 560, "10ff00"], [1000, 640, "44ff00"], [1000, 710, "50d000"], [1060, 660, "48e000"], [950, 500, "00ff00"], [800, 480, "00ff00"], [800, 400, "00ff30"], [850, 330, "00ff80"], [930, 300, "00ff98"], [950, 380, "00ff50"], [1030, 430, "00ff48"], [1100, 500, "00f020"], [1100, 400, "00ff80"], [1060, 320, "00ffa0"], [1120, 330, "00f8a8"], [1050, 200, "00ffe4"], [920, 200, "00ffcc"], [850, 180, "00ffb8"], [960, 100, "00ffff"], [1000, 130, "00fff8"], [1050, 110, "00ffff"], [880, 60, "00fff4"], [960, -50, "00ffff"], [1030, 50, "00ffff"], [940, 20, "00ffff"], [990, 0, "00ffff"], [950, -150, "00f0ff"], [980, -200, "00b0ff"], [985, -235, "0090ff"], [1150, 500, "00d830"],
];
const rgb = samples.map(([x, y, h]) => [x, y, parseInt(h.slice(0, 2), 16), parseInt(h.slice(2, 4), 16), parseInt(h.slice(4), 16)]);
const shade = (x: number, y: number) => {
  let r = 0, g = 0, b = 0, w = 0;
  rgb.forEach(s => { const k = 1 / Math.pow((x - s[0]) ** 2 + (y - s[1]) ** 2 + 500, 2.1); w += k; r += k * s[2]; g += k * s[3]; b += k * s[4]; });
  return `rgb(${Math.round(r / w)},${Math.round(g / w)},${Math.round(b / w)})`;
};
const strips = Array.from({ length: 116 }, (_, i) => -255 + i * 9);
const stops = Array.from({ length: 29 }, (_, i) => 50 + i * 41);

const Lobe = () => (
  <g transform={`translate(${OX} ${OY}) scale(.33333)`}>
    <defs>
      <clipPath id="lobe"><path d={toPath(outline, true)} /></clipPath>
      {strips.map(y => <linearGradient key={y} id={`s${y + 300}`}>{stops.map((x, i) => <stop key={x} offset={i / 28} stopColor={shade(x, y + 4)} />)}</linearGradient>)}
    </defs>
    <g clipPath="url(#lobe)">
      {strips.map(y => <rect key={y} x="50" y={y} width="1148" height="10" fill={`url(#s${y + 300})`} />)}
      <path d="M1105 190L1150 280L1162 370L1168 450L1158 530L1138 595L1112 650L1070 702L1080 722L1210 640V200Z" fill="#4c4c4c" />
      <g fill="none" stroke="#4c4c4c">
        {cols.map((c, i) => <path key={i} d={toPath(c)} strokeWidth={i > 23 ? 3.400 : 5} strokeDasharray={i > 26 ? "26 5 40 7" : undefined} />)}
        {rows.map((c, i) => <path key={i} d={toPath(c)} strokeWidth={i > 22 ? 3 : 4} />)}
      </g>
      <path d="M945 -200L975 -262L1000 -262L990 -215L978 -190L965 -150L940 -120L905 -100Z" fill="#4c4c4c" fillOpacity=".6" />
    </g>
    <path d="M108 300L92 370L74 430L58 500L56 590L64 640L80 670L90 670L72 590L74 500L95 430L118 340Z" fill="#4c4c4c" fillOpacity=".45" />
    <path d={toPath(outline.slice(26))} fill="none" stroke="#4c4c4c" strokeWidth="4.500" />
  </g>
);

const LegendBar = styled.div`position:absolute;left:1305px;top:4px;width:64px;color:#000;font:9px/13px "DejaVu Sans",sans-serif;`;
const LegendTitle = styled.div`letter-spacing:.75px;width:70px;font-size:9px`;
const LegendBody = styled.div`display:flex;justify-content:flex-end;gap:7px;padding-top:2px;margin-right:4px`;
const LegendNums = styled.div`text-align:right;letter-spacing:.7px;font-size:9px;div{height:13.300px;line-height:13px}`;
const Ramp = styled.div`width:9px;height:133px;margin-top:7px;background:linear-gradient(red,#ff0 25%,#0f0 50%,#0ff 75%,#00f)`;

const Scene = () => (
  <svg width="1374" height="832" viewBox="261 181 1374 832" shapeRendering="crispEdges">
    <path d="M1072 412L1078 405L1092 404L1098 410L1092 425L1082 440L1074 440Z" fill="#4c4c4c" />
    <path d="M1083 407L1092 405L1097 411L1086 428L1083 420Z" fill="#18c8e8" /><path d="M1085 405L1090 430M1089 405L1083 434M1094 405L1082 430M1082 411L1096 409M1082 416L1096 414" stroke="#4c4c4c" />
    <Sphere cx={904} cy={466} r={172.500} seed={0} />
    <Lobe />
    <Sphere cx={1256} cy={481} r={172.500} seed={1.300} />
    <path d="M1080.500 249V437" stroke="#f00000" /><path d="M1079.500 397V435" stroke="#ff8400" /><path d="M1080.500 437V470" stroke="#d83030" strokeDasharray="2 3" />
    <path d="M831 463.500L1080 473.500" stroke="#0000e0" strokeWidth="1.300" strokeDasharray="9 2" />
    <path d="M1079 475L1057 583" stroke="#10f000" strokeWidth="1.200" strokeDasharray="9 1.500" />
    <g fontFamily="DejaVu Sans" fontSize="10" textAnchor="middle">
      <text x="1080.500" y="230" fill="#f00000">Z</text><text x="808" y="466" fill="#0000e0">X</text><text x="1055" y="595" fill="#10f000" fontSize="8">Y</text>
      <text x="296.500" y="952" fill="#f00000">Z</text><text x="267.500" y="977" fill="#0000d0">X</text><text x="290.500" y="993" fill="#00f000">Y</text>
    </g>
    <path d="M297 961A16 11 0 1 0 291 983L297 976Z" fill="#bdbdbd" /><path d="M296 968L288 970L288 979L296 980Z" fill="#7c7c7c" />
    <path d="M277 974H296V977H277Z" fill="#1818b0" /><path d="M275 975L279 972V978Z" fill="#0a0a80" />
    <path d="M295.500 958H298.500V976H295.500Z" fill="#c01010" /><path d="M293 959L297 955.500L301 959Z" fill="#a00808" />
    <path d="M294 976H299V982H294Z" fill="#0a6a0a" /><circle cx="295" cy="983.500" r="3.500" fill="#00e800" />
  </svg>
);

const treeIcons: Record<string, React.ReactNode> = {
  near: <NearIcon />, far: <FarIcon />, p: <PIcon />, src: <SourceIcon />, cfg: <ConfigIcon />,
  o: <Swatch $c="#ff9900" />, g: <Swatch $c="#999999" />, r: <Swatch $c="#ff0000" />,
};
type Node = { h: number; cells: string[]; icons?: string[]; t: string; ls?: number };
const tree: Node[] = [
  { h: 16, cells: ["toggleEnd"], icons: ["cfg"], t: "StandardConfiguration1 [37.4741 MHz, 7...", ls: -.62 },
  { h: 13, cells: ["none", "toggle"], t: "Media" },
  { h: 16, cells: ["none", "line", "tee"], icons: ["o"], t: "Perfect electric conductor", ls: -.56 },
  { h: 16, cells: ["none", "line", "tee"], icons: ["g"], t: "Perfect magnetic conductor", ls: -.7 },
  { h: 16, cells: ["none", "line", "end"], icons: ["r"], t: "Free space" },
  { h: 13, cells: ["none", "toggle"], t: "Mesh model", ls: -.34 },
  { h: 13, cells: ["none", "line", "end"], t: "FEKO Mesh", ls: -.55 },
  { h: 13, cells: ["none", "toggle"], t: "Excitations" },
  { h: 16, cells: ["none", "line", "end"], icons: ["src"], t: "VoltageSource1", ls: -.6 },
  { h: 13, cells: ["none", "toggleEnd"], t: "Requests" },
  { h: 16, cells: ["none", "none", "tee"], icons: ["near"], t: "NearField1", ls: -.5 },
  { h: 16, cells: ["none", "none", "tee"], icons: ["p", "near"], t: "NearField1", ls: -.5 },
  { h: 16, cells: ["none", "none", "tee"], icons: ["far"], t: "FarField1", ls: -.4 },
  { h: 16, cells: ["none", "none", "tee"], icons: ["p", "far"], t: "FarField1", ls: -.4 },
  { h: 16, cells: ["none", "none", "end"], icons: ["p"], t: "Power", ls: -.45 },
];
const TreeRow = ({ n, sel }: { n: Node; sel?: boolean }) => (
  <Row $h={n.h}>
    {n.cells.map((k, i) => <Cell key={i} $k={k}>{k.startsWith("toggle") && <Toggle />}</Cell>)}
    {n.icons?.map((ic, i) => "ogr".includes(ic) ? <React.Fragment key={i}>{treeIcons[ic]}</React.Fragment> : <IconGap key={i} $g={i ? 1 : 3}>{treeIcons[ic]}</IconGap>)}
    <TreeLabel $gap={n.icons ? 5 : 2} $sel={sel} $ls={n.ls}>{n.t}</TreeLabel>
  </Row>
);

const SectionHead = ({ t }: { t: string }) => <Section><Down c="#6f7278" w={9} h={6} />{t}</Section>;
const Combo = ({ t, w }: { t: string; w?: number }) => <Select $w={w}>{t}<Down w={7} h={4} /></Select>;

const RunIcon = ({ k }: { k: number }) => (
  <svg width="16" height="16" viewBox="0 0 16 16">
    {k ? <><path d="M1 1H15L10 6L13 14H6L4 8Z" fill="#9ccc4a" stroke="#4f7d14" /><path d="M2 2L8 8M8 1V8M1 7H8M3 13L9 6" stroke="#c01818" /></>
      : <><path d="M1 1V15M15 1V15" stroke="#5a4a10" strokeWidth="1.500" /><path d="M1 3H15M1 7H15M1 11H15" stroke="#39500f" strokeWidth="2" /><path d="M2 4.500H14M2 8.500H14" stroke="#9ccc4a" /><path d="M1 14H15" stroke="#e0a020" strokeWidth="2" /></>}
    <circle cx="11.500" cy="11" r="4.300" fill="#8fc43a" stroke="#4f7d14" /><path d="M10 8.500V13.500L14 11Z" fill="#fff" />
  </svg>
);

export default function App() {
  return (
    <Screen>
      <Global />
      <Defs>{grad}</Defs>
      <TitleBar>
        <TitleText><Feko l="P" s={17} />POSTFEKO - sphere</TitleText>
        <WinButtons>
          <WinButton $w={28}><svg width="12" height="5"><rect x=".5" y=".5" width="11" height="4" fill="#fff" stroke="#444" /></svg></WinButton>
          <WinButton $w={27}><svg width="12" height="12" viewBox="0 0 12 12"><path d="M3.500 1.500H10.500V8.500H8.500V3.500H3.500Z" fill="#fff" stroke="#444" /><path d="M1.500 3.500H8.500V10.500H1.500Z" fill="#fff" stroke="#444" /><rect x="4" y="6" width="2" height="2" fill="#345" /></svg></WinButton>
          <WinButton $w={47} $close><svg width="12" height="10" viewBox="0 0 12 10"><path d="M1.500 1L10.500 9M10.500 1L1.500 9" stroke="#50343a" strokeWidth="4" /><path d="M2 1.500L10 8.500M10 1.500L2 8.500" stroke="#fff" strokeWidth="2.500" /></svg></WinButton>
        </WinButtons>
      </TitleBar>
      <QuickBar>
        <QuickIcons>
          <svg width="90" height="16" viewBox="0 0 90 16">
            <path d="M2.500 1H9L13.500 5V15.500H2.500Z" fill="#fff" stroke="#1c1c1c" /><path d="M9 1V5H13.500Z" fill="#5aa01c" stroke="#2e5a0c" strokeWidth=".6" />
            <path d="M25.500 2H38V15H25.500Z" fill="#7fbf2e" stroke="#4f8a12" /><rect x="28" y="2.500" width="8" height="5" fill="#f0f8e4" /><rect x="28.500" y="10" width="7" height="5" fill="#fff" /><rect x="30" y="11" width="2" height="3" fill="#4f8a12" />
            <path d="M42.500 2V14" stroke="#222" /><path d="M44.500 2V14" stroke="#fff" />
            <path d="M54 6C59 3 65 4 64 9C63 12 62 13 59 15" fill="none" stroke="#5e9a28" strokeWidth="2.400" /><path d="M51 8L51.500 1L58 7.500Z" fill="#5e9a28" />
            <path d="M84 6C79 3 74 4 75 9C76 12 77 13 80 15" fill="none" stroke="#a6a8ac" strokeWidth="1.800" /><path d="M88 7L87 1L81 6.500Z" fill="#a6a8ac" />
          </svg>
        </QuickIcons>
        <Context>3D View</Context>
        <Spacer />
        <Search>Search (Alt+S) ...</Search>
        <QuickRight>
          <RunIcon k={0} /><Feko l="C" /><Feko l="E" /><RunIcon k={1} />
          <IconGap $g={6}><svg width="16" height="16" viewBox="0 0 16 16"><circle cx="8" cy="8" r="7" fill="#1f47a8" stroke="#8a96b4" strokeWidth="1.500" /><text x="5" y="12" fontFamily="DejaVu Sans Condensed" fontWeight="bold" fontSize="11" fill="#fff">?</text></svg></IconGap>
        </QuickRight>
      </QuickBar>
      <TabRow>
        <AppButton><svg width="14" height="11" viewBox="0 0 14 11"><path d="M0 0H5V11H0Z" fill="#fff" /><path d="M6 0H14V11H6Z" fill="#e8f4e6" /><path d="M7 2.500H13M7 5.500H13M7 8.500H13" stroke="#3c8c38" /></svg><Down c="#fff" w={8} h={4} /></AppButton>
        <RibbonTab $w={53}>Home</RibbonTab><RibbonTab $w={78}>Time analysis</RibbonTab><RibbonTab $w={71}>Reporting</RibbonTab><RibbonTab $w={38}>View</RibbonTab>
        <RibbonTab $w={58}>Display</RibbonTab><RibbonTab $w={42} $on>Mesh</RibbonTab><RibbonTab $w={53}>Result</RibbonTab><RibbonTab $w={57}>Animate</RibbonTab>
      </TabRow>
      <Ribbon>
        {groups.map(g => (
          <Group key={g.title} $w={g.w}>
            <GroupItems>{g.tools.map(t => <React.Fragment key={t.a + t.b}>{t.i === "funnel" && <Divider />}<ToolItem t={t} /></React.Fragment>)}</GroupItems>
            <GroupTitle>{g.title}</GroupTitle>
          </Group>
        ))}
      </Ribbon>

      <Body>
        <LeftCol>
          <PanelHead>Project Browser</PanelHead>
          <Box $h={89}>
            <TreeRow n={{ h: 13, cells: ["toggleEnd"], t: "Models" }} />
            <TreeRow sel n={{ h: 13, cells: ["none", "end"], t: "sphere" }} />
          </Box>
          <Gap $h={3} />
          <PanelHead $h={16}>Model Browser</PanelHead>
          <MiniTabs><MiniTab $w={46} $on>Model</MiniTab><MiniTab $w={53}>Results</MiniTab></MiniTabs>
          <Box $h={424}>{tree.map((n, i) => <TreeRow key={i} n={n} />)}</Box>
          <Gap $h={3} />
          <PanelHead>Details Browser</PanelHead>
          <Box $h={266}><Columns><span>Property</span><span>Value</span></Columns></Box>
        </LeftCol>

        <Centre>
          <DocTabs>
            <DocTab><Cube3D /><span>sphere1</span><Close><CloseX /></Close></DocTab>
            <DocTab><GraphIcon /><span>Cartesian graph1</span><Close><CloseX /></Close></DocTab>
            <DocTab $on><Cube3D /><span>sphere2</span><Close $on><CloseX /></Close></DocTab>
          </DocTabs>
          <Canvas>
            <Scene />
            <LegendBar>
              <LegendTitle>Total Gain</LegendTitle>
              <LegendBody>
                <LegendNums>{["15.0", "13.5", "12.0", "10.5", "9.0", "7.5", "6.0", "4.5", "3.0", "1.5", "0.0"].map(n => <div key={n}>{n}</div>)}</LegendNums>
                <Ramp />
              </LegendBody>
            </LegendBar>
          </Canvas>
        </Centre>

        <RightCol>
          <PanelHead>sphere2 source</PanelHead>
          <SourceWrap><Source><b>sphere:</b>StandardConfiguration1</Source></SourceWrap>
          <PanelHead>3D View results</PanelHead>
          <Results>
            <ResultList>
              <ResultRow>
                <ResultSel><FarIcon c="#c8dff0" />FarField1</ResultSel>
                <svg width="16" height="10" viewBox="0 0 16 10"><path d="M1 5Q8 -2 15 5Q8 11 1 5Z" fill="#f4f4f4" stroke="#9a9a9a" /><circle cx="8" cy="5" r="3" fill="#8a8a8a" /></svg>
              </ResultRow>
            </ResultList>
            <Scroll><Up /><Down c="#85878a" w={7} h={4} /></Scroll>
          </Results>
          <Gap $h={3} />
          <PanelHead $h={16}>FarField1 (FarField)</PanelHead>
          <Form>
            <FormMain>
              <SectionHead t="Request" />
              <Gap $h={4} $c="transparent" /><Combo t="FarField1" /><Gap $h={4} $c="transparent" />
              <SectionHead t="Slice" />
              <Gap $h={4} $c="transparent" /><Legend>Plot type</Legend><Combo t="3D surface" />
              <Gap $h={2} $c="transparent" /><Legend>Fixed</Legend>
              <FieldRow><span>Frequency</span><Combo t="74.9481 MHz" w={199} /></FieldRow>
              <Gap $h={4} $c="transparent" />
              <SectionHead t="Quantity" />
              <Gap $h={4} $c="transparent" /><Combo t="Gain" /><Gap $h={5} $c="transparent" />
              <Options>
                <OptRow><Opt><Radio $on />Total</Opt></OptRow>
                <OptRow><Opt><Radio />Theta</Opt><Opt><Radio />Phi</Opt></OptRow>
                <OptRow $ls={-.42}><Opt><Radio />Ludwig III (Co)</Opt><Opt><Radio />Ludwig III (Cross)</Opt></OptRow>
                <OptRow><Opt><Radio />LHC</Opt><Opt><Radio />RHC</Opt></OptRow>
                <OptRow $last><Opt><Radio />Z [+45º]</Opt><Opt><Radio />S [-45º]</Opt></OptRow>
              </Options>
              <Checks><Opt $gap={4}><Check />dB</Opt><Opt $gap={4}><Check />Normalise</Opt></Checks>
              <SectionHead t="Maths" />
            </FormMain>
            <Scroll><Up /><Down c="#85878a" w={7} h={4} /></Scroll>
          </Form>
        </RightCol>
      </Body>

      <Status>
        <StatusGroup $w={1260} $border={false} />
        <StatusGroup $w={108}>Tools:<Icon n="tape" s={16} /><Icon n="angle" s={16} /><Icon n="find" s={16} /></StatusGroup>
        <StatusGroup $w={104} />
        <StatusGroup $w={141}>Display:
          <svg width="16" height="16" viewBox="0 0 16 16"><path d="M5 3L13 5L12 13Q7 17 3 13Z" fill="#8fc43a" stroke="#3c6a0c" /><path d="M2 8L9 1L15 4L8 12Z" fill="none" stroke="#c01818" strokeWidth="1.500" /></svg>
          <svg width="16" height="16" viewBox="0 0 16 16"><path d="M8 0L11 4H5ZM8 16L11 12H5ZM0 8L4 5V11ZM16 8L12 5V11ZM7 3H9V13H7ZM3 7H13V9H3Z" fill="#85878b" /></svg>
          <svg width="16" height="16" viewBox="0 0 16 16"><path d="M4 5H10V12H4ZM8 3H13V10H8Z" fill="#e0e1e4" stroke="#85878b" /><path d="M1 8H15M8 1V15" fill="none" stroke="#85878b" /></svg>
          <svg width="16" height="16" viewBox="0 0 16 16"><path d="M1.500 1.500H14.500V14.500H1.500Z" fill="none" stroke="#808286" strokeWidth="2" strokeDasharray="2.500 1.800" /><rect x="5" y="5" width="6" height="6" fill="#c4c5c8" stroke="#76787c" /></svg>
        </StatusGroup>
        <StatusGroup $w={105} />
        <StatusGroup $w={96}>Cursors:
          <svg width="16" height="16" viewBox="0 0 16 16"><rect width="16" height="16" fill="#dcdde0" /><path d="M1 15Q5 14 4 1M7 0V16" stroke="#707276" fill="none" /><path d="M8 4H15V12H8ZM8 8H15" fill="#eee" stroke="#85878b" /></svg>
          <svg width="16" height="16" viewBox="0 0 16 16"><path d="M1 2H15V11H8L4 15V11H1Z" fill="#e4e5e8" stroke="#85878b" /><path d="M3 5H13M3 8H10" stroke="#999" /></svg>
        </StatusGroup>
      </Status>

      <TaskBar>
        <TaskSlot $w={54}>
          <svg width="39" height="39" viewBox="0 0 39 39">
            <defs><radialGradient id="orb" cx=".5" cy=".95" r=".9"><stop offset="0" stopColor="#35e0ff" /><stop offset=".35" stopColor="#1a86c4" /><stop offset=".8" stopColor="#174a82" /><stop offset="1" stopColor="#2c5f96" /></radialGradient></defs>
            <circle cx="19.500" cy="19.500" r="18" fill="url(#orb)" stroke="#7ea6c8" strokeWidth="1.500" /><path d="M3 18A16.500 16.500 0 0 1 36 18Q20 12 3 18Z" fill="#cfe0ee" fillOpacity=".55" />
            <path d="M12 10Q16 7 19 9L17 18Q13 16 10 19Z" fill="#f06a2c" /><path d="M20.500 10Q25 12 30 9L27.500 18.500Q23 21 18.500 19Z" fill="#8cc63e" /><path d="M9.500 20.500Q13 17.500 16.500 19.500L14.500 28Q11 26 7.500 28.500Z" fill="#3f9be0" /><path d="M18 20.500Q22.500 22.500 27 20L24.500 29Q20 31 15.800 28.500Z" fill="#fcc62c" />
          </svg>
        </TaskSlot>
        <TaskSlot $w={67}>
          <svg width="27" height="26" viewBox="0 0 27 26"><path d="M17 2H26V25H17Z" fill="#9cc8e6" stroke="#5d93bd" /><path d="M1 2H20V24H1Z" fill="#8fbfe0" stroke="#5d93bd" /><path d="M23 3V25" stroke="#5d93bd" /><circle cx="11" cy="13" r="8.800" fill="#f27a18" stroke="#fbd0a0" strokeWidth=".8" /><path d="M8 8V18L16.500 13Z" fill="#fff" /></svg>
        </TaskSlot>
        <TaskButton>
          <svg width="31" height="31" viewBox="0 0 31 31"><circle cx="17" cy="14" r="12.500" fill="#1d5ca4" /><circle cx="17" cy="9" r="7" fill="#3f9ad8" /><path d="M25 4Q31 10 29.500 18C28 26 20 30.500 14 30C6 29.500 .5 23 1 15Q1.500 8 5 5Q6 8 8 8L13 8.500Q11 12 14 14L10 16Q11 21 17 20.500Q23 21 26 15Q28 9 25 4Z" fill="#e8641c" /><path d="M24 3Q32 9 29.500 18Q28 24 22 27.500Q27 20 27 14Q27 8 24 3Z" fill="#fcd040" /></svg>
        </TaskButton>
        <TaskButton>
          <svg width="26" height="26" viewBox="0 0 26 26"><path d="M2 4L8 1L11 4H18L20 8V18L4 22Z" fill="#f6dc84" stroke="#b8922c" /><path d="M3 8L20 5V16L4 21Z" fill="#fbeeb4" /><rect x="9" y="10" width="16" height="13" fill="#fff" stroke="#1b5fc0" strokeWidth="1.500" /><path d="M9 11H25" stroke="#1b5fc0" strokeWidth="3" /><path d="M12 15.500H14.500M16 15.500H18.500M20 15.500H22.500" stroke="#3a76c8" strokeWidth="2" /><path d="M12 19.500H14.500M16 19.500H18.500M20 19.500H22.500" stroke="#c4742c" strokeWidth="2" /></svg>
        </TaskButton>
        <TaskButton><Feko l="C" s={31} /></TaskButton>
        <TaskButton $on><Feko l="P" s={31} /></TaskButton>
        <Spacer />
        <Tray>
          <svg width="16" height="16" viewBox="0 0 16 16"><path d="M4 3L12 2V12L8 14H4Z" fill="#4fb83c" /><path d="M6 11C4 6 8 3 11 5M6 13L10 6" stroke="#0c5a1c" fill="none" strokeWidth="1.500" /></svg>
          <IconGap $g={1}><svg width="17" height="17" viewBox="0 0 17 17"><rect x=".5" y=".5" width="16" height="16" rx="2" fill="#f09a1c" stroke="#ffc870" /><path d="M8.500 3Q11 5 13 4.500Q14 11 8.500 14.500Q3 11 4 4.500Q6 5 8.500 3Z" fill="#fff" /><path d="M8.500 3V14M4 8.500H13" stroke="#f09a1c" /></svg></IconGap>
          <svg width="16" height="16" viewBox="0 0 16 16"><rect x=".5" y="1.500" width="15" height="13" rx="1.500" fill="#a4a6aa" stroke="#e4e6e8" /><rect x="4.500" y="7" width="7" height="5" fill="#222" /><path d="M6 7V5Q8 2.500 10 5V7" stroke="#222" fill="none" strokeWidth="1.300" /></svg>
          <svg width="16" height="16" viewBox="0 0 16 16"><path d="M1 5H4L8 1V15L4 11H1Z" fill="#fff" /><path d="M10 5Q12 8 10 11M12 3Q15.500 8 12 13" stroke="#fff" fill="none" strokeWidth="1.200" /></svg>
        </Tray>
        <Clock>4:02 PM<br />5/2/2016</Clock>
        <ShowDesk />
      </TaskBar>
    </Screen>
  );
}
